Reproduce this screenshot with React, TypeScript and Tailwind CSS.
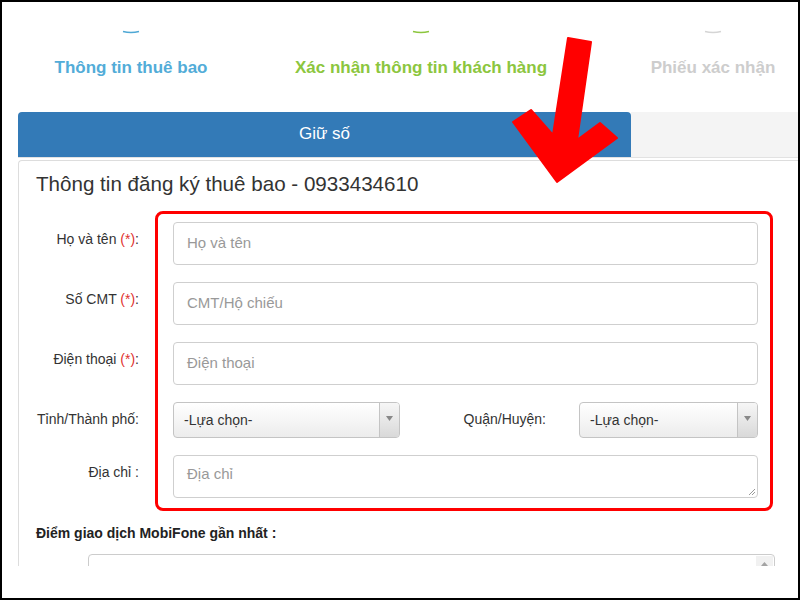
import React from "react";

const Arc = ({ color }: { color: string }) => (
  <svg width="18" height="4" viewBox="0 0 18 4" className="block">
    <path d="M1 1.5 Q9 3.4 17 1.5" stroke={color} strokeWidth="1.6" fill="none" />
  </svg>
);

const Req = () => <span className="text-[#e0312f]">(*)</span>;

const Label = ({ children, w = "w-[120px]" }: { children: React.ReactNode; w?: string }) => (
  <div className={`${w} shrink-0 text-right text-[14px] leading-[20px] pt-[7px] text-[#333]`}>{children}</div>
);

const Field = ({ text }: { text: string }) => (
  <div className="ml-[34px] w-[585px] h-[43px] border border-[#cfcfcf] rounded-[4px] bg-white flex items-center pl-[13px] text-[15px] text-[#999]">
    {text}
  </div>
);

const Select = ({ w }: { w: string }) => (
  <div className={`${w} h-[36px] border border-[#c4c4c4] rounded-[4px] bg-gradient-to-b from-white to-[#ececec] flex overflow-hidden`}>
    <div className="flex-1 flex items-center pl-[10px] text-[14px] text-[#333]">-Lựa chọn-</div>
    <div className="w-[20px] border-l border-[#c4c4c4] bg-gradient-to-b from-[#f6f6f6] to-[#d9d9d9] flex items-center justify-center pb-[4px]">
      <svg width="7" height="5" viewBox="0 0 7 5">
        <path d="M0 0 H7 L3.5 5 Z" fill="#888" />
      </svg>
    </div>
  </div>
);

export default function App() {
  return (
    <div className="w-[800px] h-[600px] border-2 border-black bg-white relative overflow-hidden font-['Liberation_Sans',Arial,sans-serif]">
      <div className="h-[564px] overflow-hidden">
        {/* steps header */}
        <div className="h-[110px] flex font-bold text-[17px] leading-[20px] whitespace-nowrap">
          <div className="w-[258px] shrink-0 flex flex-col items-center pt-[28px]">
            <Arc color="#4fa8d5" />
            <div className="mt-[24px] text-[#52acd8]">Thông tin thuê bao</div>
          </div>
          <div className="w-[322px] shrink-0 flex flex-col items-center pt-[28px]">
            <Arc color="#8cc63e" />
            <div className="mt-[24px] text-[#8cc63e]">Xác nhận thông tin khách hàng</div>
          </div>
          <div className="w-[262px] shrink-0 flex flex-col items-center pt-[28px]">
            <Arc color="#d5d5d5" />
            <div className="mt-[24px] text-[#cdcdcd]">Phiếu xác nhận</div>
          </div>
        </div>

        {/* tab bar */}
        <div className="ml-[16px] flex h-[45px]">
          <div className="w-[613px] rounded-t-[4px] bg-[#337ab7] text-white text-[17px] flex items-center justify-center pb-[1px]">
            Giữ số
          </div>
          <div className="flex-1 bg-[#f4f4f4]" />
        </div>
        <div className="ml-[16px] h-[1px] bg-[#e2e2e2]" />
        <div className="h-[2px]" />

        {/* panel */}
        <div className="ml-[16px] border-l border-t border-[#dddddd] rounded-tl-[4px] h-[420px]">
          <div className="pl-[17px] pt-[11px] text-[20.6px] leading-[24px] text-[#333]">
            Thông tin đăng ký thuê bao - 0933434610
          </div>

          <div className="mt-[26px] flex flex-col gap-[17px]">
            <div className="flex items-start">
              <Label>
                Họ và tên <Req />:
              </Label>
              <Field text="Họ và tên" />
            </div>
            <div className="flex items-start">
              <Label>
                Số CMT <Req />:
              </Label>
              <Field text="CMT/Hộ chiếu" />
            </div>
            <div className="flex items-start">
              <Label>
                Điện thoại <Req />:
              </Label>
              <Field text="Điện thoại" />
            </div>
            <div className="flex items-start">
              <Label>Tỉnh/Thành phố:</Label>
              <div className="ml-[34px]">
                <Select w="w-[227px]" />
              </div>
              <Label w="w-[146px]">Quận/Huyện:</Label>
              <div className="ml-[33px]">
                <Select w="w-[179px]" />
              </div>
            </div>
            <div className="flex items-start">
              <Label>Địa chỉ :</Label>
              <div className="ml-[34px] w-[585px] h-[43px] border border-[#cfcfcf] rounded-[4px] bg-white pl-[13px] pt-[8px] text-[15px] leading-[20px] text-[#999] relative">
                Địa chỉ
                <svg width="8" height="8" viewBox="0 0 8 8" className="absolute right-[1px] bottom-[1px]">
                  <path d="M7 1 L1 7 M7 4 L4 7" stroke="#999" strokeWidth="1" />
                </svg>
              </div>
            </div>
          </div>

          <div className="mt-[25px] pl-[17px] text-[14px] leading-[20px] font-bold text-[#222]">
            Điểm giao dịch MobiFone gần nhất :
          </div>
          <div className="mt-[11px] ml-[69px] w-[687px] h-[60px] border border-[#cccccc] rounded-[4px] flex justify-end">
            <div className="w-[17px] mt-[1px] mr-[1px] h-[16px] bg-[#f1f1f1] flex items-center justify-center">
              <svg width="7" height="4" viewBox="0 0 7 4">
                <path d="M0 4 H7 L3.5 0 Z" fill="#a3a3a3" />
              </svg>
            </div>
          </div>
        </div>
      </div>

      {/* annotation: red frame */}
      <div className="absolute left-[153px] top-[209px] w-[618px] h-[300px] border-[3px] border-[#ff0000] rounded-[8px] pointer-events-none" />

      {/* annotation: red arrow */}
      <svg width="800" height="600" viewBox="0 0 800 600" className="absolute left-[-2px] top-[-2px] pointer-events-none">
        <polygon
          points="568,38 591,42 577,140 600,123 617,138 557,182 513,122 531,110 553,135"
          fill="#ff0000"
          stroke="#ff0000"
          strokeWidth="2"
          strokeLinejoin="round"
        />
      </svg>
    </div>
  );
}
